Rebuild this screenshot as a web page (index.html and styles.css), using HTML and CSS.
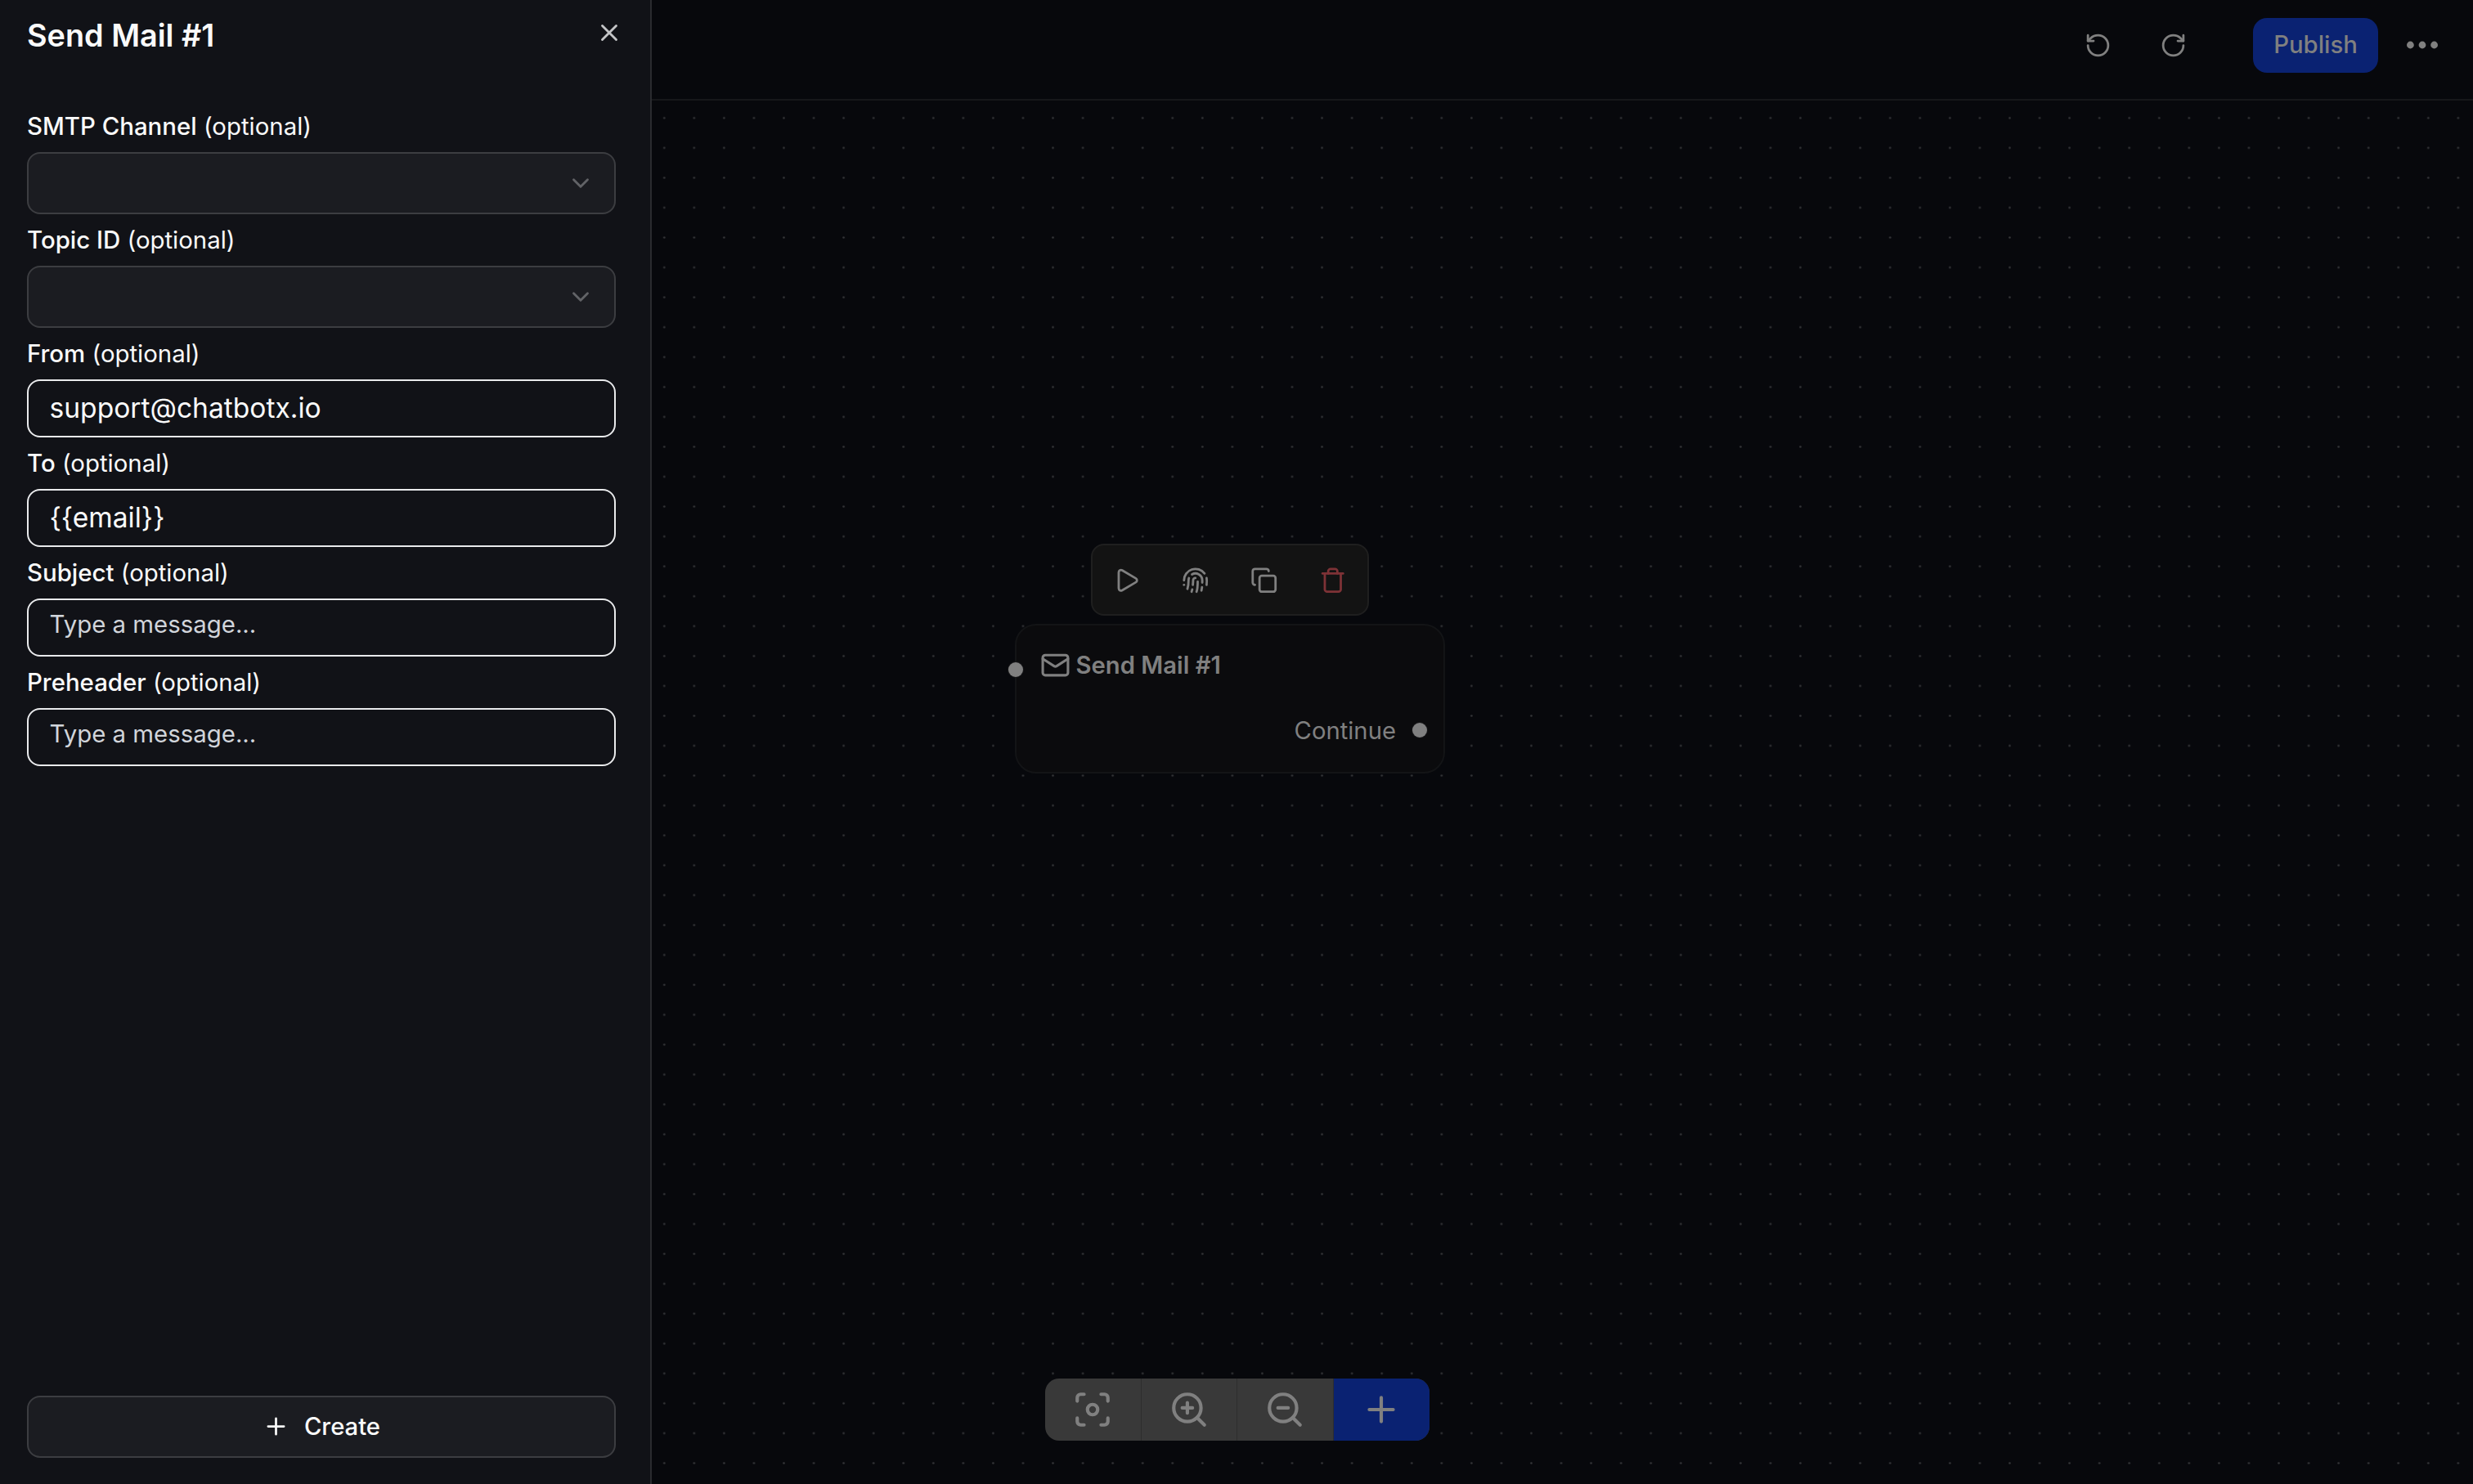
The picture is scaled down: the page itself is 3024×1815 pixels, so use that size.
FILE: index.html
```html
<!DOCTYPE html>
<html lang="en">
<head>
	<meta charset="utf-8">
	<title>Send Mail #1</title>
	<link rel="stylesheet" href="styles.css">
</head>
<body>
	<aside class="sidebar">
		<div class="sidebar-head">
			<h1>Send Mail #1</h1>
			<button class="close"><svg viewBox="0 0 24 24"><path d="M18 6 6 18M6 6l12 12"/></svg></button>
		</div>
		<form class="fields">
			<label><b>SMTP Channel</b> (optional)</label>
			<div class="select"><svg viewBox="0 0 24 24"><path d="m6 9 6 6 6-6"/></svg></div>
			<label><b>Topic ID</b> (optional)</label>
			<div class="select"><svg viewBox="0 0 24 24"><path d="m6 9 6 6 6-6"/></svg></div>
			<label><b>From</b> (optional)</label>
			<div class="input">support@chatbotx.io</div>
			<label><b>To</b> (optional)</label>
			<div class="input">{{email}}</div>
			<label><b>Subject</b> (optional)</label>
			<div class="input placeholder">Type a message...</div>
			<label><b>Preheader</b> (optional)</label>
			<div class="input placeholder">Type a message...</div>
		</form>
		<button class="create"><svg viewBox="0 0 24 24"><path d="M5 12h14M12 5v14"/></svg>Create</button>
	</aside>

	<main class="main">
		<header class="topbar">
			<svg class="undo" viewBox="0 0 24 24"><path d="M3 12a9 9 0 1 0 9-9 9.75 9.75 0 0 0-6.74 2.74L3 8"/><path d="M3 3v5h5"/></svg>
			<svg class="redo" viewBox="0 0 24 24"><path d="M21 12a9 9 0 1 1-9-9c2.52 0 4.93 1 6.74 2.74L21 8"/><path d="M21 3v5h-5"/></svg>
			<button class="publish">Publish</button>
			<svg class="more" viewBox="0 0 38 10"><circle cx="4.4" cy="5" r="4.4"/><circle cx="19" cy="5" r="4.4"/><circle cx="33.6" cy="5" r="4.4"/></svg>
		</header>

		<div class="canvas">
			<svg class="dots">
				<defs>
					<pattern id="grid" x="-3" y="3" width="36.56" height="36.56" patternUnits="userSpaceOnUse">
						<circle cx="18.28" cy="18.28" r="1.3" fill="#343538"/>
					</pattern>
				</defs>
				<rect width="100%" height="100%" fill="url(#grid)"/>
			</svg>

			<div class="node-tools">
				<svg viewBox="0 0 24 24"><path d="M5 5a2 2 0 0 1 3.008-1.728l11.997 6.998a2 2 0 0 1 .003 3.458l-12 7A2 2 0 0 1 5 19z"/></svg>
				<svg viewBox="0 0 24 24"><path d="M12 10a2 2 0 0 0-2 2c0 1.02-.1 2.51-.26 4"/><path d="M14 13.12c0 2.38 0 6.38-1 8.88"/><path d="M17.29 21.02c.12-.6.43-2.3.5-3.02"/><path d="M2 12a10 10 0 0 1 18-6"/><path d="M2 16h.01"/><path d="M21.8 16c.2-2 .131-5.354 0-6"/><path d="M5 19.5C5.5 18 6 15 6 12a6 6 0 0 1 .34-2"/><path d="M8.65 22c.21-.66.45-1.32.57-2"/><path d="M9 6.8a6 6 0 0 1 9 5.2v2"/></svg>
				<svg viewBox="0 0 24 24"><rect x="8" y="8" width="14" height="14" rx="2"/><path d="M4 16c-1.1 0-2-.9-2-2V4c0-1.1.9-2 2-2h10c1.1 0 2 .9 2 2"/></svg>
				<svg class="delete" viewBox="0 0 24 24"><path d="M3 6h18"/><path d="M19 6v14c0 1-1 2-2 2H7c-1 0-2-1-2-2V6"/><path d="M8 6V4c0-1 1-2 2-2h4c1 0 2 1 2 2v2"/></svg>
			</div>

			<div class="node">
				<span class="handle handle-in"></span>
				<div class="node-title">
					<svg viewBox="0 0 24 24"><rect x="2" y="4" width="20" height="16" rx="2"/><path d="m22 7-8.97 5.7a1.94 1.94 0 0 1-2.06 0L2 7"/></svg>
					Send Mail #1
				</div>
				<div class="node-next">Continue <span class="handle"></span></div>
			</div>

			<div class="controls">
				<button><svg viewBox="0 0 24 24"><circle cx="12" cy="12" r="3"/><path d="M3 7V5a2 2 0 0 1 2-2h2M17 3h2a2 2 0 0 1 2 2v2M21 17v2a2 2 0 0 1-2 2h-2M7 21H5a2 2 0 0 1-2-2v-2"/></svg></button>
				<button><svg viewBox="0 0 24 24"><circle cx="11" cy="11" r="8"/><path d="M21 21l-4.35-4.35M11 8v6M8 11h6"/></svg></button>
				<button><svg viewBox="0 0 24 24"><circle cx="11" cy="11" r="8"/><path d="M21 21l-4.35-4.35M8 11h6"/></svg></button>
				<button class="add"><svg viewBox="0 0 24 24"><path d="M5 12h14M12 5v14"/></svg></button>
			</div>
		</div>
	</main>
</body>
</html>
```
FILE: styles.css
```css
* {
  box-sizing: border-box;
}
body {
  margin: 0;
  height: 100vh;
  display: flex;
  overflow: hidden;
  background: #07080c;
  color: #fafafa;
  font-family: Inter, "Liberation Sans", sans-serif;
  font-size: 29.25px;
}
button {
  border: none;
  padding: 0;
  background: none;
  color: inherit;
  font: inherit;
}
svg {
  display: block;
  flex: none;
  fill: none;
  stroke: currentColor;
  stroke-width: 2;
  stroke-linecap: round;
  stroke-linejoin: round;
}

/* left panel */
.sidebar {
  width: 797px;
  flex: none;
  display: flex;
  flex-direction: column;
  padding: 0 42px 32px 33px;
  background: #111217;
  border-right: 2px solid #2a2b2f;
}
.sidebar-head {
  display: flex;
  justify-content: space-between;
  height: 130px;
  padding-top: 18px;
}
h1 {
  margin: 0;
  font-size: 37.8px;
  line-height: 50px;
  font-weight: 600;
}
.close {
  width: 34px;
  height: 34px;
  margin: 5px -9px 0 0;
  color: #c4c5c7;
}
.close svg {
  width: 34px;
  height: 34px;
}
.fields {
  flex: 1;
}
label {
  display: block;
  height: 63px;
  padding-top: 14px;
  font-size: 29.4px;
  line-height: 36px;
}
label b {
  font-weight: 500;
}
.fields label:first-child {
  height: 56px;
  padding-top: 7px;
}
.select {
  height: 76px;
  display: flex;
  align-items: center;
  justify-content: flex-end;
  padding-right: 24px;
  border: 2px solid #3c3d41;
  border-radius: 16px;
  background: #1b1c21;
  color: #626367;
}
.select svg {
  width: 34px;
  height: 34px;
}
.input {
  height: 71px;
  padding: 0 25.5px;
  border: 2px solid #e9eaec;
  border-radius: 16px;
  font-size: 33.6px;
  line-height: 66px;
}
.placeholder {
  color: #d1d5db;
  font-size: 29.4px;
  line-height: 59px;
}
.create {
  display: flex;
  align-items: center;
  justify-content: center;
  gap: 18px;
  height: 76px;
  padding-bottom: 1px;
  border: 2px solid #3c3d41;
  border-radius: 16px;
  background: #1b1c21;
  font-weight: 500;
}
.create svg {
  width: 33px;
  height: 33px;
}

/* flow editor */
.main {
  flex: 1;
  display: flex;
  flex-direction: column;
  color: #808080;
}
.topbar {
  height: 123px;
  display: flex;
  align-items: center;
  justify-content: flex-end;
  padding: 0 43px 11px 0;
  border-bottom: 2px solid #16171a;
}
.undo, .redo {
  width: 33px;
  height: 33px;
}
.undo {
  margin-right: 59px;
}
.redo {
  margin-right: 81px;
}
.publish {
  width: 153px;
  height: 67px;
  margin-right: 35px;
  padding-bottom: 1px;
  border-radius: 17px;
  background: #0a2272;
  font-weight: 500;
}
.more {
  width: 38px;
  height: 10px;
  fill: #808080;
  stroke: none;
}
.canvas {
  position: relative;
  flex: 1;
}
.dots {
  width: 100%;
  height: 100%;
  stroke: none;
}
.node-tools {
  position: absolute;
  left: 537px;
  top: 542px;
  width: 340px;
  height: 88px;
  display: flex;
  align-items: center;
  justify-content: space-between;
  padding: 1px 25px 0;
  border: 2px solid #1f1f1f;
  border-radius: 16px;
  background: #131313;
}
.node-tools svg {
  width: 33.5px;
  height: 33.5px;
}
.node-tools .delete {
  color: #7e3236;
}
.node {
  position: absolute;
  left: 444px;
  top: 640px;
  width: 526px;
  height: 183px;
  padding: 28px 20px 0 29px;
  border: 2px solid #131416;
  border-radius: 26px;
  background: #0b0b0d;
}
.node-title {
  display: flex;
  align-items: center;
  gap: 6.5px;
  height: 40px;
  font-weight: 600;
}
.node-title svg {
  width: 37px;
  height: 37px;
}
.node-next {
  display: flex;
  align-items: center;
  justify-content: flex-end;
  gap: 20px;
  height: 40px;
  margin-top: 40px;
}
.handle {
  width: 18px;
  height: 18px;
  border-radius: 50%;
  background: #808080;
  box-shadow: 0 0 0 1px #161618;
}
.handle-in {
  position: absolute;
  left: -10px;
  top: 44.5px;
}
.controls {
  position: absolute;
  left: 481px;
  bottom: 53px;
  width: 470px;
  height: 76px;
  display: flex;
  overflow: hidden;
  border-radius: 17px;
  background: #393939;
}
.controls button {
  width: 25%;
  display: flex;
  align-items: center;
  justify-content: center;
  border-right: 1px solid #2e2e2e;
}
.controls svg {
  width: 50px;
  height: 50px;
}
.controls .add {
  border: none;
  background: #0a2272;
}
```
